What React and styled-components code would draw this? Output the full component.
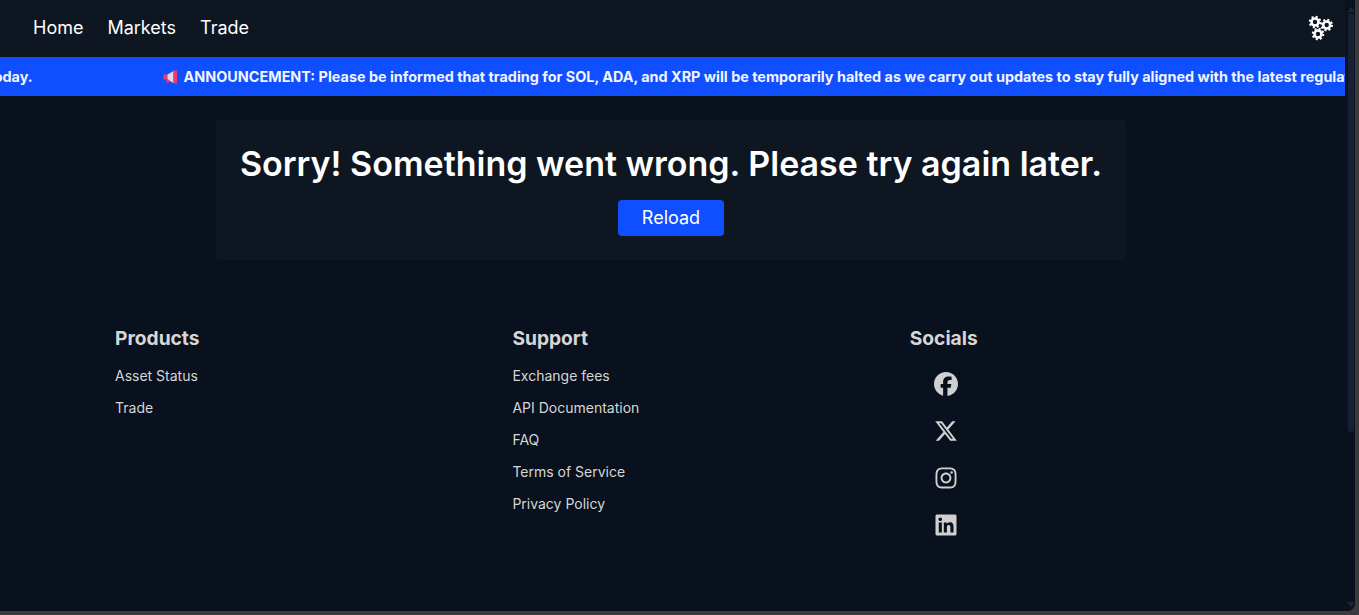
import React from "react";
import styled, { createGlobalStyle } from "styled-components";
import { FaFacebook, FaXTwitter, FaInstagram, FaLinkedin } from "react-icons/fa6";

const GlobalStyle = createGlobalStyle`
  html, body {
    margin: 0;
    height: 100%;
    overflow: hidden;
    background: #3b3b3b;
  }
  * {
    box-sizing: border-box;
  }
`;

const Gear = ({ cx, cy }) => (
  <g fill="none" stroke="#fff">
    <circle cx={cx} cy={cy} r="3.5" strokeWidth="2.6" />
    <circle cx={cx} cy={cy} r="5.2" strokeWidth="2.2" strokeDasharray="2 2.08" />
  </g>
);

const CogsIcon = () => (
  <svg width="26" height="26" viewBox="0 0 26 26">
    <Gear cx={7} cy={7} />
    <Gear cx={18.7} cy={10} />
    <Gear cx={10} cy={19} />
  </svg>
);

const MegaphoneIcon = () => (
  <svg width="15" height="14" viewBox="0 0 15 14">
    <path d="M0.5 4.5h4v5h-4z" fill="#f0396f" />
    <path d="M4.5 4.5l6-3.5v12l-6-3.5z" fill="#d9dce6" />
    <path d="M10.5 .5h3.5v13h-3.5z" fill="#f0396f" />
    <path d="M3 9.5h2.5l.8 3.5H4z" fill="#e8356f" />
  </svg>
);

const App = () => {
  return (
    <Window>
      <GlobalStyle />
      <Page>
        <NavBar>
          <NavLinks>
            <NavLink>Home</NavLink>
            <NavLink>Markets</NavLink>
            <NavLink>Trade</NavLink>
          </NavLinks>
          <CogsIcon />
        </NavBar>
        <Ticker>
          <TickerTrack>
            <TickerItem>Trading resumes today.</TickerItem>
            <TickerItem>
              <MegaphoneIcon />
              ANNOUNCEMENT: Please be informed that trading for SOL, ADA, and XRP
              will be temporarily halted as we carry out updates to stay fully
              aligned with the latest regulations.
            </TickerItem>
          </TickerTrack>
        </Ticker>
        <ErrorCard>
          <ErrorTitle>Sorry! Something went wrong. Please try again later.</ErrorTitle>
          <ReloadButton>Reload</ReloadButton>
        </ErrorCard>
        <Footer>
          <FooterColumn>
            <ColumnTitle>Products</ColumnTitle>
            <FooterLink>Asset Status</FooterLink>
            <FooterLink>Trade</FooterLink>
          </FooterColumn>
          <FooterColumn>
            <ColumnTitle>Support</ColumnTitle>
            <FooterLink>Exchange fees</FooterLink>
            <FooterLink>API Documentation</FooterLink>
            <FooterLink>FAQ</FooterLink>
            <FooterLink>Terms of Service</FooterLink>
            <FooterLink>Privacy Policy</FooterLink>
          </FooterColumn>
          <FooterColumn>
            <ColumnTitle>Socials</ColumnTitle>
            <SocialList>
              <FaFacebook />
              <FaXTwitter />
              <FaInstagram />
              <FaLinkedin />
            </SocialList>
          </FooterColumn>
        </Footer>
      </Page>
      <Scrollbar>
        <ArrowUp />
        <Thumb />
        <ArrowDown />
      </Scrollbar>
    </Window>
  );
};

export default App;

const Window = styled.div`
  display: flex;
  width: 1355px;
  height: 611px;
  background: #08111d;
  border-bottom-right-radius: 8px;
  overflow: hidden;
  font-family: Inter, "Liberation Sans", sans-serif;
`;

const Page = styled.div`
  flex: 1;
  min-width: 0;
`;

const NavBar = styled.header`
  display: flex;
  align-items: center;
  justify-content: space-between;
  height: 57px;
  padding: 0 11px 2px 33px;
  background: #0e1621;
`;

const NavLinks = styled.nav`
  display: flex;
  gap: 24px;
`;

const NavLink = styled.a`
  color: #fff;
  font-size: 18px;
  line-height: 24px;
`;

const Ticker = styled.div`
  height: 39px;
  background: #0f4fff;
  overflow: hidden;
`;

const TickerTrack = styled.div`
  display: flex;
  gap: 130px;
  width: max-content;
  height: 100%;
  margin-left: -133px;
`;

const TickerItem = styled.div`
  display: flex;
  align-items: center;
  gap: 6px;
  color: #f2f4ff;
  font-size: 14.4px;
  font-weight: 700;
  white-space: nowrap;
`;

const ErrorCard = styled.section`
  display: flex;
  flex-direction: column;
  align-items: center;
  width: 910px;
  height: 140px;
  margin: 24px 0 0 216px;
  padding-top: 24px;
  background: #0e1621;
  border-radius: 4px;
`;

const ErrorTitle = styled.h1`
  margin: 0 0 16px;
  color: #fff;
  font-size: 34px;
  font-weight: 600;
  line-height: 40px;
  white-space: nowrap;
`;

const ReloadButton = styled.button`
  width: 106px;
  height: 36px;
  padding: 0 0 2px;
  border: 0;
  border-radius: 4px;
  background: #0f4fff;
  color: #fff;
  font-family: inherit;
  font-size: 18px;
`;

const Footer = styled.footer`
  display: grid;
  grid-template-columns: repeat(3, 397.4px);
  padding: 66px 0 0 115px;
`;

const FooterColumn = styled.div`
  display: flex;
  flex-direction: column;
  align-items: flex-start;
`;

const ColumnTitle = styled.h3`
  margin: 0 0 10px;
  color: #d6d6d6;
  font-size: 19.2px;
  font-weight: 700;
  line-height: 24px;
`;

const FooterLink = styled.a`
  color: #d6d6d6;
  font-size: 14px;
  line-height: 20px;
  padding: 6px 0;
`;

const SocialList = styled.div`
  display: flex;
  flex-direction: column;
  gap: 23px;
  padding: 12px 0 0 24.2px;
  color: #d0d0d0;

  svg {
    display: block;
    width: 24px;
    height: 24px;
  }
`;

const Scrollbar = styled.div`
  display: flex;
  flex-direction: column;
  align-items: center;
  flex: 0 0 10px;
  padding-left: 1px;
  background: #0a1220;
`;

const Thumb = styled.div`
  width: 6px;
  height: 419px;
  margin-top: 1px;
  border-radius: 3px;
  background: #162136;
`;

const ArrowUp = styled.div`
  margin-top: 7px;
  border: 4px solid transparent;
  border-top: 0;
  border-bottom: 5px solid #1b2536;
`;

const ArrowDown = styled.div`
  margin-top: auto;
  margin-bottom: 4px;
  border: 4px solid transparent;
  border-bottom: 0;
  border-top: 5px solid #1b2536;
`;
